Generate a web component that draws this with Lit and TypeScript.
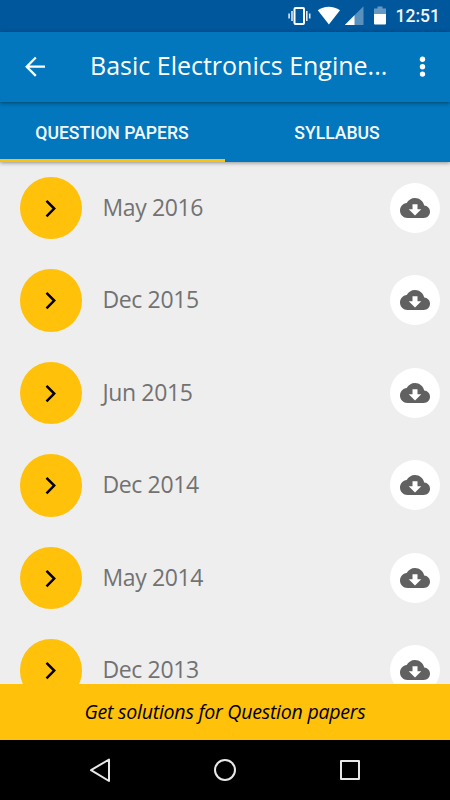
import { LitElement, html, css } from "lit";
import { customElement, property } from "lit/decorators.js";

@customElement("paper-row")
class PaperRow extends LitElement {
  @property() label = "";

  static styles = css`
    :host {
      display: flex;
      align-items: center;
      height: 92.5px;
      padding: 0 10px 0 20px;
      box-sizing: border-box;
      flex: none;
    }
    .go {
      width: 62.4px;
      height: 62.4px;
      border-radius: 50%;
      background: #ffc10a;
      flex: none;
    }
    .label {
      flex: 1;
      padding: 0 0 2px 20px;
      font: 23px/30px "Open Sans", "Noto Sans", sans-serif;
      letter-spacing: -0.35px;
      color: #727272;
      white-space: nowrap;
    }
    .download {
      width: 50px;
      height: 50px;
      border-radius: 50%;
      background: #fff;
      flex: none;
    }
    svg {
      display: block;
    }
  `;

  render() {
    return html`
      <div class="go">
        <svg width="62.5" height="62.5" viewBox="0 0 62.5 62.5">
          <path d="M26.500 23.800 34.200 31.600 26.500 39.400" fill="none" stroke="#000" stroke-width="2.500" />
        </svg>
      </div>
      <div class="label">${this.label}</div>
      <div class="download">
        <svg width="50" height="50" viewBox="-8 -8 40 40">
          <path
            fill="#616161"
            d="M19.35 10.04C18.67 6.59 15.64 4 12 4 9.11 4 6.6 5.64 5.35 8.04 2.34 8.36 0 10.91 0 14c0 3.31 2.69 6 6 6h13c2.76 0 5-2.24 5-5 0-2.64-2.05-4.78-4.65-4.96zM17 13l-5 5-5-5h3V9h4v4h3z"
          />
        </svg>
      </div>
    `;
  }
}

@customElement("app-root")
class AppRoot extends LitElement {
  private papers = ["May 2016", "Dec 2015", "Jun 2015", "Dec 2014", "May 2014", "Dec 2013"];

  static styles = css`
    :host {
      display: flex;
      flex-direction: column;
      width: 450px;
      height: 800px;
      overflow: hidden;
      background: #eee;
    }
    svg {
      display: block;
      flex: none;
    }
    .status {
      height: 31.6px;
      flex: none;
      display: flex;
      align-items: center;
      justify-content: flex-end;
      box-sizing: border-box;
      padding-right: 10px;
      background: #01579b;
      color: #fff;
    }
    .clock {
      font: 500 17.5px/32px Roboto, sans-serif;
      margin-left: 8px;
      letter-spacing: 0;
      color: #f0f5f9;
    }
    .bar {
      position: relative;
      z-index: 1;
      height: 70px;
      flex: none;
      display: flex;
      align-items: center;
      background: #0277bd;
      color: #fff;
      box-shadow: 0 1px 4px rgba(0, 0, 0, 0.45);
    }
    .title {
      flex: 1;
      margin-left: 20px;
      padding-bottom: 3px;
      font: 25px/34px "Open Sans", "Noto Sans", sans-serif;
      white-space: nowrap;
    }
    .tabs {
      position: relative;
      z-index: 0;
      height: 60px;
      flex: none;
      display: flex;
      background: #0277bd;
      box-shadow: 0 1px 4px rgba(0, 0, 0, 0.4);
    }
    .tab {
      flex: 1;
      box-sizing: border-box;
      border-bottom: 3px solid transparent;
      padding: 2px 1px 0 0;
      text-align: center;
      font: 500 17.6px/58px Roboto, sans-serif;
      color: #f5f9fc;
    }
    .tab.active {
      border-bottom-color: #ffc107;
    }
    .list {
      flex: 1;
      min-height: 0;
      overflow: hidden;
      display: flex;
      flex-direction: column;
    }
    .cta {
      height: 56.5px;
      flex: none;
      background: #ffc10a;
      text-align: center;
      font: italic 19.6px/56px "Open Sans", "Noto Sans", sans-serif;
      letter-spacing: -0.26px;
      color: #000;
    }
    .nav {
      height: 60px;
      flex: none;
      display: flex;
      justify-content: center;
      background: #000;
    }
  `;

  render() {
    return html`
      <div class="status">
        <svg width="100" height="32" viewBox="288 0 100 32">
          <rect x="294.5" y="8" width="9.5" height="16" rx="1" fill="none" stroke="#fff" stroke-width="2" />
          <path d="M292 11v10M289.1 13.5v5M306.8 11v10M309.7 13.5v5" stroke="#dce8f2" stroke-width="1.6" />
          <path d="M317.8 10.3C324 5.4 333.500 5.400 340 10.300L328.900 24.500Z" fill="#fff" />
          <path d="M363.500 6.300V25H344.800Z" fill="#5a90bd" />
          <path d="M354.500 15.300V25H344.800Z" fill="#fff" />
          <path d="M374 8.500H377.500V6.500H382.500V8.500H386V14H374Z" fill="#6698c1" />
          <path d="M374 14H386V23.500Q386 24.500 385 24.500H375Q374 24.500 374 23.500Z" fill="#fff" />
        </svg>
        <span class="clock">12:51</span>
      </div>
      <div class="bar">
        <svg width="70" height="70" viewBox="0 32 70 70">
          <path d="M45 66.700H27M35.800 57.500 26.700 66.700 35.800 75.900" fill="none" stroke="#fff" stroke-width="2.300" />
        </svg>
        <div class="title">Basic Electronics Engine...</div>
        <svg width="50" height="70" viewBox="400 32 50 70" fill="#fff">
          <circle cx="422.500" cy="59.300" r="2.700" />
          <circle cx="422.500" cy="66.700" r="2.700" />
          <circle cx="422.500" cy="74.100" r="2.700" />
        </svg>
      </div>
      <div class="tabs">
        <div class="tab active">QUESTION PAPERS</div>
        <div class="tab">SYLLABUS</div>
      </div>
      <div class="list">${this.papers.map((p) => html`<paper-row .label=${p}></paper-row>`)}</div>
      <div class="cta">Get solutions for Question papers</div>
      <div class="nav">
        <svg width="450" height="60" viewBox="0 740 450 60" fill="none" stroke="#e8e8e8" stroke-width="2" stroke-linejoin="round">
          <path d="M109 759.500V781L91 770.200Z" />
          <circle cx="225" cy="770" r="10" />
          <rect x="341" y="761" width="18" height="18" />
        </svg>
      </div>
    `;
  }
}
